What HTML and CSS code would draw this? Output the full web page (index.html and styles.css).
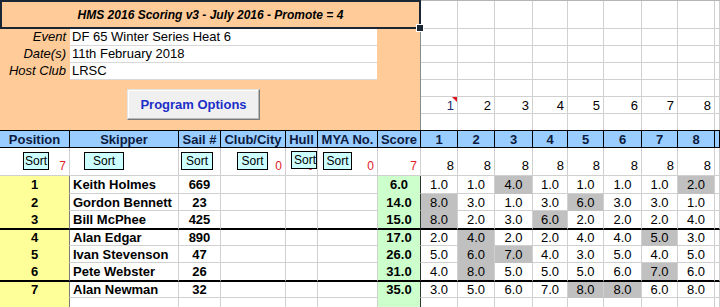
FILE: index.html
```html
<!DOCTYPE html>
<html>
<head>
<meta charset="utf-8">
<title>HMS 2016 Scoring</title>
<link rel="stylesheet" href="styles.css">
</head>
<body>
<div class="sheet">
  <div class="panel">
    <div class="title">HMS 2016 Scoring v3 - July 2016 - Promote = 4</div>
    <div class="panel-body">
      <div class="field"><span class="label">Event</span><span class="value">DF 65 Winter Series Heat 6</span></div>
      <div class="field"><span class="label">Date(s)</span><span class="value">11th February 2018</span></div>
      <div class="field"><span class="label">Host Club</span><span class="value">LRSC</span></div>
      <div class="btn-row"><button class="prog-btn">Program Options</button></div>
    </div>
  </div>

  <div class="topgrid">
    <div class="c"></div><div class="c"></div><div class="c"></div><div class="c"></div><div class="c"></div><div class="c"></div><div class="c"></div><div class="c"></div><div class="c"></div>
    <div class="c"></div><div class="c"></div><div class="c"></div><div class="c"></div><div class="c"></div><div class="c"></div><div class="c"></div><div class="c"></div><div class="c"></div>
    <div class="c"></div><div class="c"></div><div class="c"></div><div class="c"></div><div class="c"></div><div class="c"></div><div class="c"></div><div class="c"></div><div class="c"></div>
    <div class="c"></div><div class="c"></div><div class="c"></div><div class="c"></div><div class="c"></div><div class="c"></div><div class="c"></div><div class="c"></div><div class="c"></div>
    <div class="c"></div><div class="c"></div><div class="c"></div><div class="c"></div><div class="c"></div><div class="c"></div><div class="c"></div><div class="c"></div><div class="c"></div>
    <div class="c num note first">1</div><div class="c num">2</div><div class="c num">3</div><div class="c num">4</div><div class="c num">5</div><div class="c num">6</div><div class="c num">7</div><div class="c num">8</div><div class="c"></div>
    <div class="c nb"></div><div class="c nb"></div><div class="c nb"></div><div class="c nb"></div><div class="c nb"></div><div class="c nb"></div><div class="c nb"></div><div class="c nb"></div><div class="c nb"></div>
  </div>

  <div class="row head">
    <div class="cell h">Position</div><div class="cell h">Skipper</div><div class="cell h">Sail #</div><div class="cell h">Club/City</div><div class="cell h">Hull</div><div class="cell h">MYA No.</div><div class="cell h">Score</div>
    <div class="cell h">1</div><div class="cell h">2</div><div class="cell h">3</div><div class="cell h">4</div><div class="cell h">5</div><div class="cell h">6</div><div class="cell h">7</div><div class="cell h">8</div><div class="cell h"></div>
  </div>

  <div class="row sorts">
    <div class="cell s"><span class="cnt">7</span><span class="sbtn b-pos">Sort</span></div>
    <div class="cell s"><span class="sbtn b-skip">Sort</span></div>
    <div class="cell s"><span class="sbtn b-sail">Sort</span></div>
    <div class="cell s"><span class="cnt">0</span><span class="sbtn b-club">Sort</span></div>
    <div class="cell s"><span class="cnt">0</span><span class="sbtn b-hull">Sort</span></div>
    <div class="cell s"><span class="cnt">0</span><span class="sbtn b-mya">Sort</span></div>
    <div class="cell s"><span class="cnt">7</span></div>
    <div class="cell s"><span class="eight">8</span></div><div class="cell s"><span class="eight">8</span></div><div class="cell s"><span class="eight">8</span></div><div class="cell s"><span class="eight">8</span></div><div class="cell s"><span class="eight">8</span></div><div class="cell s"><span class="eight">8</span></div><div class="cell s"><span class="eight">8</span></div><div class="cell s"><span class="eight">8</span></div>
    <div class="cell"></div>
  </div>

  <div class="row">
    <div class="cell pos">1</div><div class="cell name">Keith Holmes</div><div class="cell sail">669</div><div class="cell"></div><div class="cell"></div><div class="cell"></div><div class="cell score">6.0</div>
    <div class="cell r">1.0</div><div class="cell r">1.0</div><div class="cell r g">4.0</div><div class="cell r">1.0</div><div class="cell r">1.0</div><div class="cell r">1.0</div><div class="cell r">1.0</div><div class="cell r g">2.0</div><div class="cell"></div>
  </div>
  <div class="row">
    <div class="cell pos">2</div><div class="cell name">Gordon Bennett</div><div class="cell sail">23</div><div class="cell"></div><div class="cell"></div><div class="cell"></div><div class="cell score">14.0</div>
    <div class="cell r g">8.0</div><div class="cell r">3.0</div><div class="cell r">1.0</div><div class="cell r">3.0</div><div class="cell r g">6.0</div><div class="cell r">3.0</div><div class="cell r">3.0</div><div class="cell r">1.0</div><div class="cell"></div>
  </div>
  <div class="row thick">
    <div class="cell pos">3</div><div class="cell name">Bill McPhee</div><div class="cell sail">425</div><div class="cell"></div><div class="cell"></div><div class="cell"></div><div class="cell score">15.0</div>
    <div class="cell r g">8.0</div><div class="cell r">2.0</div><div class="cell r">3.0</div><div class="cell r g">6.0</div><div class="cell r">2.0</div><div class="cell r">2.0</div><div class="cell r">2.0</div><div class="cell r">4.0</div><div class="cell"></div>
  </div>
  <div class="row">
    <div class="cell pos">4</div><div class="cell name">Alan Edgar</div><div class="cell sail">890</div><div class="cell"></div><div class="cell"></div><div class="cell"></div><div class="cell score">17.0</div>
    <div class="cell r">2.0</div><div class="cell r g">4.0</div><div class="cell r">2.0</div><div class="cell r">2.0</div><div class="cell r">4.0</div><div class="cell r">4.0</div><div class="cell r g">5.0</div><div class="cell r">3.0</div><div class="cell"></div>
  </div>
  <div class="row">
    <div class="cell pos">5</div><div class="cell name">Ivan Stevenson</div><div class="cell sail">47</div><div class="cell"></div><div class="cell"></div><div class="cell"></div><div class="cell score">26.0</div>
    <div class="cell r">5.0</div><div class="cell r g">6.0</div><div class="cell r g">7.0</div><div class="cell r">4.0</div><div class="cell r">3.0</div><div class="cell r">5.0</div><div class="cell r">4.0</div><div class="cell r">5.0</div><div class="cell"></div>
  </div>
  <div class="row thick">
    <div class="cell pos">6</div><div class="cell name">Pete Webster</div><div class="cell sail">26</div><div class="cell"></div><div class="cell"></div><div class="cell"></div><div class="cell score">31.0</div>
    <div class="cell r">4.0</div><div class="cell r g">8.0</div><div class="cell r">5.0</div><div class="cell r">5.0</div><div class="cell r">5.0</div><div class="cell r">6.0</div><div class="cell r g">7.0</div><div class="cell r">6.0</div><div class="cell"></div>
  </div>
  <div class="row">
    <div class="cell pos">7</div><div class="cell name">Alan Newman</div><div class="cell sail">32</div><div class="cell"></div><div class="cell"></div><div class="cell"></div><div class="cell score">35.0</div>
    <div class="cell r">3.0</div><div class="cell r">5.0</div><div class="cell r">6.0</div><div class="cell r">7.0</div><div class="cell r g">8.0</div><div class="cell r g">8.0</div><div class="cell r">6.0</div><div class="cell r">8.0</div><div class="cell"></div>
  </div>
  <div class="row">
    <div class="cell pos"></div><div class="cell"></div><div class="cell"></div><div class="cell"></div><div class="cell"></div><div class="cell"></div><div class="cell score"></div>
    <div class="cell"></div><div class="cell"></div><div class="cell"></div><div class="cell"></div><div class="cell"></div><div class="cell"></div><div class="cell"></div><div class="cell"></div><div class="cell"></div>
  </div>
</div>
</body>
</html>
```

FILE: styles.css
```css
* { box-sizing: border-box; }
html, body { margin: 0; padding: 0; background: #fff; }
body {
  font-family: "Liberation Sans", Arial, sans-serif;
  font-size: 13px;
  color: #000;
  width: 720px;
  height: 307px;
  overflow: hidden;
}

.sheet {
  display: grid;
  width: 720px;
  grid-template-columns: 70px 109px 42px 65px 32px 60px 43px 37px 37px 38px 35px 36px 38px 36px 37px 1fr;
  grid-template-rows: 130px 18px 28px 18px 17px 19px 16px 17px 19px 16px 17px;
}

/* ---------- top-left panel ---------- */
.panel {
  grid-column: 1 / 8;
  background: #ffcc99;
  display: flex;
  flex-direction: column;
  position: relative;
  z-index: 1;
}
.title {
  height: 29px;
  border: 2px solid #1a2633;
  display: flex;
  align-items: center;
  justify-content: center;
  font-weight: bold;
  font-style: italic;
  font-size: 12px;
  position: relative;
}
.title::after {
  content: "";
  position: absolute;
  right: -5px;
  bottom: -5px;
  width: 6px;
  height: 6px;
  background: #1a2633;
  border: 1px solid #fff;
}
.panel-body {
  flex: 1;
  border-right: 1px solid #8c8c8c;
  display: flex;
  flex-direction: column;
}
.field { display: flex; height: 17px; }
.label {
  width: 70px;
  text-align: right;
  padding-right: 4px;
  font-style: italic;
  line-height: 16px;
}
.value {
  width: 307px;
  background: #fff;
  border-bottom: 1px solid #d8d8d8;
  padding-left: 2px;
  line-height: 16px;
}
.btn-row { padding: 9px 0 0 127px; }
.prog-btn {
  width: 133px;
  height: 31px;
  padding: 0;
  font-family: "Liberation Sans", Arial, sans-serif;
  font-weight: bold;
  font-size: 13px;
  color: #1c2ec8;
  background: #f0f0f0;
  border: 1px solid;
  border-color: #e4e4e4 #7a7a7a #7a7a7a #e4e4e4;
  box-shadow: inset -1px -1px 0 #b8b8b8, inset 1px 1px 0 #ffffff;
}

/* ---------- top-right grid ---------- */
.topgrid {
  grid-column: 8 / 17;
  display: grid;
  grid-template-columns: 37px 37px 38px 35px 36px 38px 36px 37px 1fr;
  grid-template-rows: 28px 17px 17px 17px 17px 17px 16px;
  border-top: 1px solid #b5b5b5;
}
.c {
  border-right: 1px solid #d0d0d0;
  border-bottom: 1px solid #d0d0d0;
}
.c.nb { border-bottom: 0; }
.num {
  display: flex;
  align-items: center;
  justify-content: flex-end;
  padding-right: 3px;
}
.num.first { color: #1f2a6b; }
.note { position: relative; }
.note::after {
  content: "";
  position: absolute;
  top: 0;
  right: 0;
  border-top: 5px solid #e0141e;
  border-left: 5px solid transparent;
}

/* ---------- table rows ---------- */
.row { display: contents; }
.cell {
  border-right: 1px solid #d0d0d0;
  border-bottom: 1px solid #d0d0d0;
  overflow: hidden;
  white-space: nowrap;
  display: flex;
  align-items: center;
}
.h {
  background: #99ccff;
  border-top: 1px solid #000;
  border-bottom-color: #000;
  border-right-color: #000;
  font-weight: bold;
  color: #0d1b3e;
  justify-content: center;
}

.s { display: grid; overflow: visible; }
.s > * { grid-area: 1 / 1; }
.cnt {
  justify-self: end;
  align-self: end;
  color: #e0202a;
  font-size: 12px;
  line-height: 13px;
  padding: 0 3px 2px 0;
}
.eight {
  justify-self: end;
  align-self: end;
  line-height: 14px;
  padding: 0 3px 2px 0;
}
.sbtn {
  justify-self: start;
  align-self: start;
  margin-top: 4px;
  height: 18px;
  background: #ccffff;
  border: 1px solid #000;
  font-size: 12px;
  line-height: 16px;
  text-align: center;
  overflow: hidden;
  white-space: nowrap;
}
.b-pos { margin-left: 23px; width: 26px; }
.b-skip { margin-left: 14px; width: 40px; }
.b-sail { margin-left: 2px; width: 32px; }
.b-club { margin-left: 16px; width: 31px; }
.b-hull { margin-left: 5px; width: 26px; margin-top: 3px; padding-left: 2px; text-align: left; }
.b-mya { margin-left: 5px; width: 29px; }

.pos {
  background: #ffff99;
  font-weight: bold;
  justify-content: center;
  border-right-color: #7a7a7a;
  border-bottom-color: transparent;
}
.name { font-weight: bold; padding-left: 3px; }
.sail { font-weight: bold; justify-content: center; }
.score {
  background: #ccffcc;
  font-weight: bold;
  justify-content: center;
  border-right-color: #333;
  border-bottom-color: transparent;
}
.r { justify-content: center; }
.g {
  background: #c0c0c0;
  border-bottom-color: transparent;
}
.row.thick > .cell { border-bottom: 2px solid #000; }
```
